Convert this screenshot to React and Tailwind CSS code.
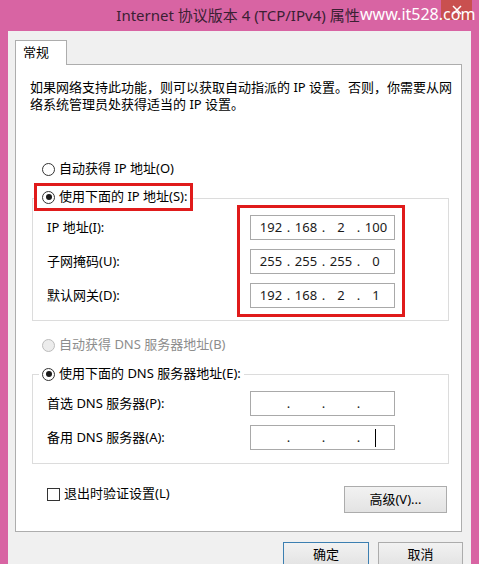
import React from "react";

const FONT = { fontFamily: '"Noto Sans", "Noto Sans CJK SC", sans-serif' };

function Radio({ checked, disabled }) {
  return (
    <span
      className={
        "flex h-[13px] w-[13px] shrink-0 items-center justify-center rounded-full border " +
        (disabled ? "border-[#bcbcbc] bg-[#ececec]" : "border-[#333333] bg-white")
      }
    >
      {checked ? <span className="h-[6px] w-[6px] rounded-full bg-[#1a1a1a]" /> : null}
    </span>
  );
}

function IpInput({ parts, cursor }) {
  const segs = parts || ["", "", "", ""];
  return (
    <div className="flex h-[25px] w-[145px] items-center border border-[#a9a9a9] bg-white pl-[5px] text-[13px] text-[#1a1a1a]">
      {segs.map((s, i) => (
        <React.Fragment key={i}>
          <span className="flex w-[30px] items-center justify-center">
            {s}
            {cursor && i === 3 ? <span className="ml-[-1px] h-[18px] w-[1px] bg-black" /> : null}
          </span>
          {i < 3 ? <span className="flex w-[5px] justify-center">.</span> : null}
        </React.Fragment>
      ))}
    </div>
  );
}

function Button({ children, primary, className }) {
  return (
    <div
      className={
        "flex items-center justify-center border bg-gradient-to-b from-[#f2f2f2] to-[#e3e3e3] text-[13px] text-black " +
        (primary ? "border-[#3c7fb1]" : "border-[#acacac]") +
        " " +
        (className || "")
      }
    >
      {children}
    </div>
  );
}

export default function App() {
  return (
    <div className="relative flex h-[564px] w-[479px] flex-col overflow-hidden bg-[#d864a3]" style={FONT}>
      {/* title bar */}
      <div className="relative flex h-[31px] shrink-0 items-center justify-center">
        <span className="ml-[-3px] text-[15px] text-[#3b2033]">Internet 协议版本 4 (TCP/IPv4) 属性</span>
        <div className="absolute right-[7px] top-0 flex h-[20px] w-[31px] items-center justify-center bg-[#c9504f]">
          <svg width="10" height="10" viewBox="0 0 10 10">
            <path d="M1 1 L9 9 M9 1 L1 9" stroke="#ffffff" strokeWidth="1.5" />
          </svg>
        </div>
        <span className="absolute left-[360px] top-[3px] z-10 whitespace-nowrap text-[16px] leading-[22px] text-white">www.it528.com</span>
      </div>

      {/* client area */}
      <div className="ml-[8px] mr-[8px] flex flex-1 flex-col bg-[#f0f0f0] pl-[7px] pr-[9px] pt-[9px]">
        {/* tab */}
        <div className="relative z-10 -mb-px flex h-[25px] w-[52px] items-center border border-b-0 border-[#adadad] bg-white pl-[7px] text-[13px] text-black">
          常规
        </div>
        {/* panel */}
        <div className="flex flex-col border border-[#adadad] bg-white pb-[18px] text-[13px] text-black">
          <div className="pl-[14px] pt-[14px] leading-[17px]">
            <div>如果网络支持此功能，则可以获取自动指派的 IP 设置。否则，你需要从网</div>
            <div>络系统管理员处获得适当的 IP 设置。</div>
          </div>

          <div className="ml-[26px] mt-[48px] flex h-[16px] items-center gap-[4px]">
            <Radio />
            <span>自动获得 IP 地址(O)</span>
          </div>

          {/* IP group */}
          <div className="relative ml-[16px] mr-[12px] mt-[21px] border border-[#dcdcdc] pb-[3px] pl-[14px] pt-[6px]">
            <div className="absolute -top-[16px] left-[1px] flex h-[28px] items-center gap-[4px] border-[3px] border-[#e01b1b] bg-white pl-[5px] pr-[3px]">
              <Radio checked />
              <span>使用下面的 IP 地址(S):</span>
            </div>
            <div className="flex items-start">
              <div className="flex w-[190px] flex-col gap-[9px] pt-[10px]">
                <div className="flex h-[25px] items-center">IP 地址(I):</div>
                <div className="flex h-[25px] items-center">子网掩码(U):</div>
                <div className="flex h-[25px] items-center">默认网关(D):</div>
              </div>
              <div className="flex flex-col gap-[9px] border-[3px] border-[#e01b1b] pb-[6px] pl-[10px] pr-[7px] pt-[7px]">
                <IpInput parts={["192", "168", "2", "100"]} />
                <IpInput parts={["255", "255", "255", "0"]} />
                <IpInput parts={["192", "168", "2", "1"]} />
              </div>
            </div>
          </div>

          <div className="ml-[26px] mt-[16px] flex h-[16px] items-center gap-[4px] text-[#8d8d8d]">
            <Radio disabled />
            <span>自动获得 DNS 服务器地址(B)</span>
          </div>

          {/* DNS group */}
          <div className="relative ml-[16px] mr-[12px] mt-[21px] border border-[#dcdcdc] pb-[13px] pl-[14px] pt-[16px]">
            <div className="absolute -top-[9px] left-[6px] flex h-[16px] items-center gap-[4px] bg-white pl-[3px] pr-[3px]">
              <Radio checked />
              <span>使用下面的 DNS 服务器地址(E):</span>
            </div>
            <div className="flex items-start">
              <div className="flex w-[203px] flex-col gap-[9px]">
                <div className="flex h-[25px] items-center">首选 DNS 服务器(P):</div>
                <div className="flex h-[25px] items-center">备用 DNS 服务器(A):</div>
              </div>
              <div className="flex flex-col gap-[9px]">
                <IpInput />
                <IpInput cursor />
              </div>
            </div>
          </div>

          <div className="ml-[31px] mr-[14px] mt-[22px] flex items-start justify-between">
            <div className="flex h-[16px] items-center gap-[4px]">
              <span className="h-[13px] w-[13px] border border-[#333333] bg-white" />
              <span>退出时验证设置(L)</span>
            </div>
            <Button className="h-[27px] w-[103px]">高级(V)...</Button>
          </div>
        </div>

        <div className="-mr-[1px] mt-[10px] flex justify-end gap-[9px]">
          <Button primary className="h-[25px] w-[86px]">确定</Button>
          <Button className="h-[25px] w-[85px]">取消</Button>
        </div>
      </div>
    </div>
  );
}
